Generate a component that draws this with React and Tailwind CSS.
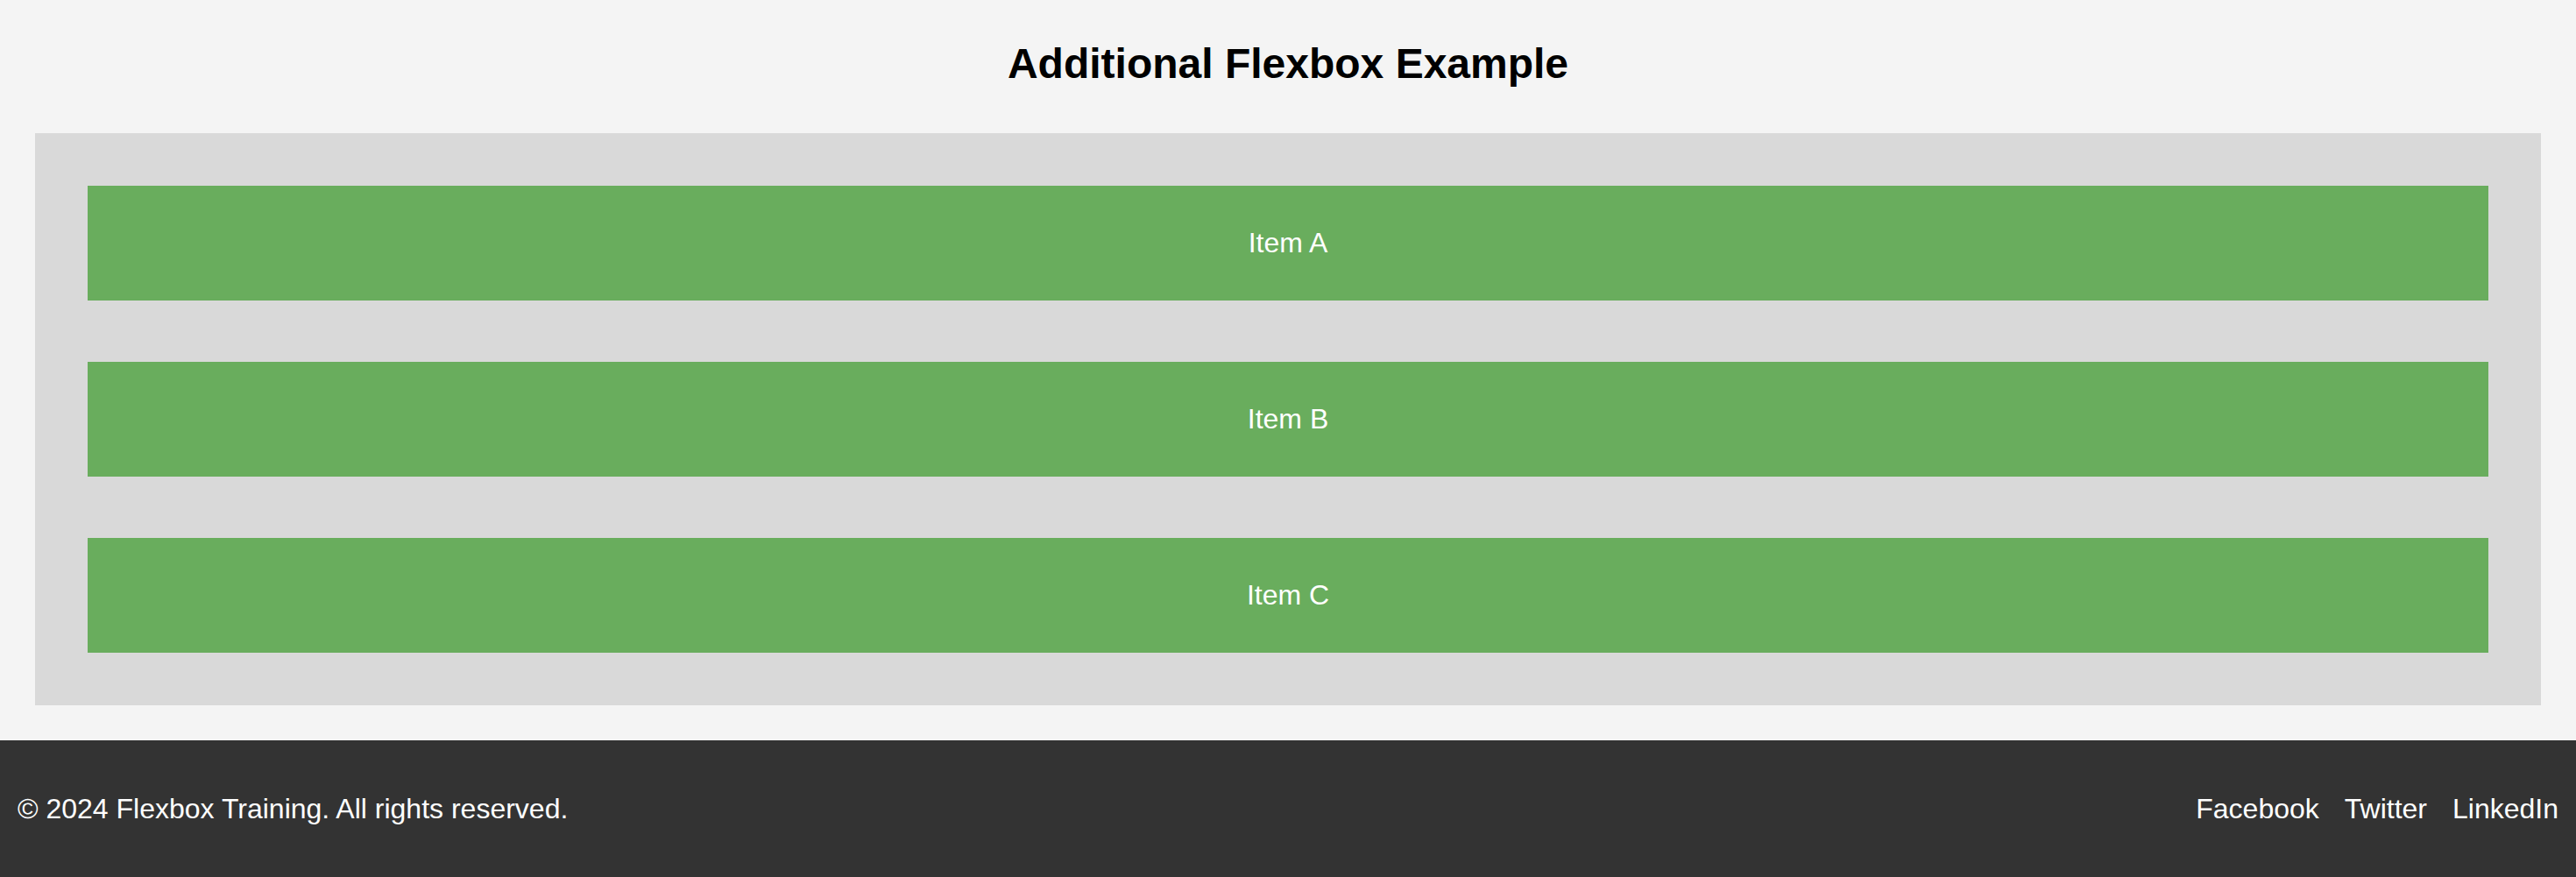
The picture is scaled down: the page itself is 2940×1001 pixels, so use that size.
import React from 'react';

const items = ['Item A', 'Item B', 'Item C'];
const links = ['Facebook', 'Twitter', 'LinkedIn'];

export default function App() {
  return (
    <div className="min-h-screen bg-[#f4f4f4] font-['Liberation_Sans',Arial,sans-serif]">
      {/* Header */}
      <div className="pt-[45px] pb-[52px]">
        <h1 className="text-center text-[48px] leading-[55px] font-bold text-black">
          Additional Flexbox Example
        </h1>
      </div>

      {/* Flex container */}
      <div className="mx-[40px] bg-[#d9d9d9] p-[60px] flex flex-col gap-[70px]">
        {items.map((item) => (
          <div
            key={item}
            className="h-[131px] bg-[#69ad5d] flex items-center justify-center text-white text-[32px] leading-[37px]"
          >
            {item}
          </div>
        ))}
      </div>

      {/* Footer */}
      <footer className="mt-[40px] h-[156px] bg-[#333333] px-[20px] flex items-center justify-between text-white text-[32px] leading-[37px]">
        <p>© 2024 Flexbox Training. All rights reserved.</p>
        <div className="flex gap-[29px]">
          {links.map((l) => (
            <a key={l} href="#" className="text-white">
              {l}
            </a>
          ))}
        </div>
      </footer>
    </div>
  );
}
